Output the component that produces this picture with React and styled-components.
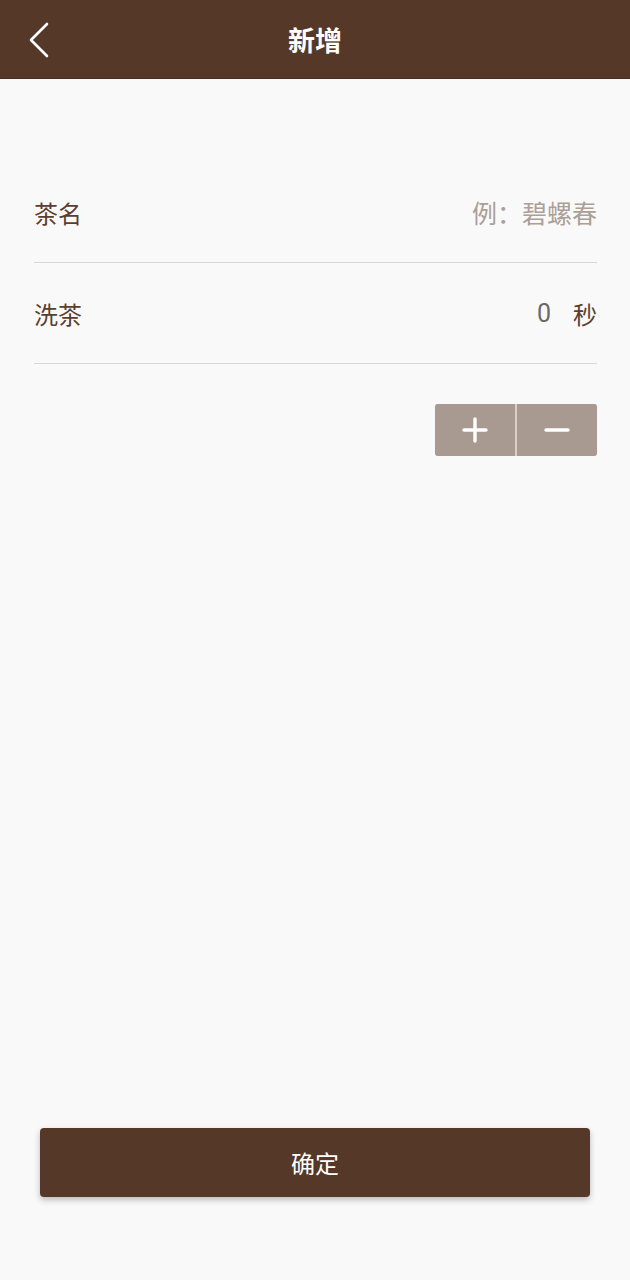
import styled, { createGlobalStyle } from "styled-components";

const GlobalStyle = createGlobalStyle`
  body {
    margin: 0;
    background: #f9f9f9;
    font-family: "Noto Sans CJK SC", "Noto Sans", sans-serif;
  }
`;

const App = () => {
  return (
    <Page>
      <GlobalStyle />
      <Header>
        <BackButton aria-label="返回">
          <svg width="24" height="36" viewBox="0 0 24 36" fill="none">
            <path
              d="M19 2 L3 18 L19 34"
              stroke="#fff"
              strokeWidth="2.6"
              strokeLinecap="round"
              strokeLinejoin="round"
            />
          </svg>
        </BackButton>
        <Title>新增</Title>
      </Header>

      <Form>
        <Row>
          <Label>茶名</Label>
          <Placeholder>例：碧螺春</Placeholder>
        </Row>
        <Row>
          <Label>洗茶</Label>
          <Value>
            <Seconds>0</Seconds>
            <Unit>秒</Unit>
          </Value>
        </Row>
        <Stepper>
          <StepButton>
            <svg width="28" height="28" viewBox="0 0 28 28">
              <path d="M14 3 V25 M3 14 H25" stroke="#fff" strokeWidth="3.4" strokeLinecap="round" />
            </svg>
          </StepButton>
          <StepButton>
            <svg width="28" height="28" viewBox="0 0 28 28">
              <path d="M3 14 H25" stroke="#fff" strokeWidth="3.4" strokeLinecap="round" />
            </svg>
          </StepButton>
        </Stepper>
      </Form>

      <Footer>
        <ConfirmButton>确定</ConfirmButton>
      </Footer>
    </Page>
  );
};

const Page = styled.div`
  min-height: 1280px;
  display: flex;
  flex-direction: column;
  background: #f9f9f9;
`;

const Header = styled.header`
  position: relative;
  height: 78px;
  background: #553827;
  display: flex;
  align-items: center;
  justify-content: center;
  border-bottom: 1px solid #4a3020;
`;

const BackButton = styled.button`
  position: absolute;
  left: 28px;
  top: 22px;
  padding: 0;
  border: none;
  background: none;
  display: flex;
`;

const Title = styled.h1`
  margin: 0;
  color: #fff;
  font-size: 27px;
  font-weight: 700;
  line-height: 1;
`;

const Form = styled.div`
  padding: 83px 33px 0 34px;
  display: flex;
  flex-direction: column;
`;

const Row = styled.div`
  height: 100px;
  display: flex;
  align-items: center;
  justify-content: space-between;
  border-bottom: 1.5px solid #d8d8d8;
  font-size: 24px;
`;

const Label = styled.span`
  color: #5a3f2f;
`;

const Placeholder = styled.span`
  color: #ab9f97;
  font-size: 25px;
`;

const Value = styled.span`
  display: flex;
  align-items: center;
  gap: 22px;
`;

const Seconds = styled.span`
  color: #6a6a6a;
  font-family: Roboto, "Noto Sans", sans-serif;
  font-size: 25px;
`;

const Unit = styled.span`
  color: #5a3f2f;
`;

const Stepper = styled.div`
  align-self: flex-end;
  margin-top: 40px;
  display: flex;
  gap: 2px;
  background: #d9d0ca;
  border-radius: 3px;
  overflow: hidden;
`;

const StepButton = styled.button`
  width: 80px;
  height: 52px;
  border: none;
  padding: 0;
  background: #a89a90;
  display: flex;
  align-items: center;
  justify-content: center;
`;

const Footer = styled.div`
  margin-top: auto;
  padding: 0 40px 83px;
`;

const ConfirmButton = styled.button`
  width: 100%;
  height: 69px;
  border: none;
  border-radius: 4px;
  background: #553827;
  color: #fff;
  font-family: "Noto Sans CJK SC", sans-serif;
  font-size: 24px;
  box-shadow: 0 3px 6px rgba(0, 0, 0, 0.25);
`;

export default App;
